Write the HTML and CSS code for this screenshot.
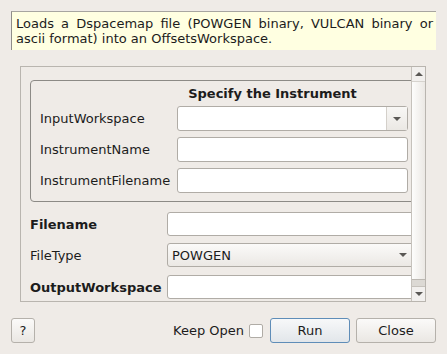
FILE: index.html
```html
<!DOCTYPE html>
<html lang="en">
<head>
    <meta charset="UTF-8">
    <title>LoadDspacemap</title>
    <link rel="stylesheet" href="styles.css">
</head>
<body>
  <div class="dialog">
    <div class="desc">
      Loads a Dspacemap file (POWGEN binary, VULCAN binary or ascii format) into an OffsetsWorkspace.
    </div>

    <div class="scroll">
      <div class="scroll-content">
        <div class="form">
          <fieldset class="group">
            <div class="group-title">Specify the Instrument</div>
            <div class="row">
              <label>InputWorkspace</label>
              <div class="combo edit">
                <span class="combo-text"></span>
                <span class="combo-btn"><span class="arrow"></span></span>
              </div>
            </div>
            <div class="row">
              <label>InstrumentName</label>
              <input type="text">
            </div>
            <div class="row">
              <label>InstrumentFilename</label>
              <input type="text">
            </div>
          </fieldset>

          <div class="row outer">
            <label class="req">Filename</label>
            <input type="text">
          </div>
          <div class="row outer">
            <label>FileType</label>
            <div class="combo button">
              <span class="combo-text">POWGEN</span>
              <span class="arrow"></span>
            </div>
          </div>
          <div class="row outer">
            <label class="req">OutputWorkspace</label>
            <input type="text">
          </div>
        </div>
      </div>
      <div class="vbar">
        <div class="vbar-btn"><span class="arrow up"></span></div>
        <div class="vbar-track">
          <div class="vbar-thumb"></div>
        </div>
        <div class="vbar-btn"><span class="arrow"></span></div>
      </div>
    </div>

    <div class="footer">
      <button class="btn help">?</button>
      <div class="spacer"></div>
      <label class="keep">Keep Open <span class="check"></span></label>
      <button class="btn run">Run</button>
      <button class="btn">Close</button>
    </div>
  </div>
</body>
</html>
```

FILE: styles.css
```css
* {
    box-sizing: border-box;
}
body {
    margin: 0;
    background: #efebe7;
    font-family: "DejaVu Sans", sans-serif;
    font-size: 13px;
    color: #1c1c1c;
}
.dialog {
    width: 447px;
    height: 354px;
    padding: 11px 11px 0 11px;
    overflow: hidden;
}
.desc {
    height: 39px;
    background: #ffffe1;
    border-top: 1px solid #a7a5a0;
    border-left: 1px solid #8f8d89;
    padding: 4px 3px 0 4px;
    line-height: 15px;
    text-align: justify;
}
.scroll {
    display: flex;
    margin: 16px 10px 0 9px;
    height: 236px;
    border: 1px solid #b9b5af;
}
.scroll-content {
    flex: 1;
    overflow: hidden;
    position: relative;
}
.form {
    width: 396px;
    padding: 13px 0 0 9px;
}
.group {
    margin: 0;
    padding: 5px 8px 8px 9px;
    border: 1px solid #8c8a86;
    border-radius: 4px;
    min-width: 0;
}
.group-title {
    font-weight: bold;
    text-align: center;
    padding-left: 97px;
    height: 20px;
    line-height: 15px;
}
.row {
    display: flex;
    align-items: center;
    height: 25px;
    margin-bottom: 6px;
}
.group .row:last-child {
    margin-bottom: 0;
}
.row label {
    width: 137px;
    flex: none;
    white-space: nowrap;
}
.row.outer {
    margin-top: 7px;
    margin-bottom: 0;
    height: 24px;
}
.group + .row.outer {
    margin-top: 10px;
}
.row.outer:last-child {
    margin-top: 8px;
}
.req {
    font-weight: bold;
}
input[type="text"] {
    flex: 1;
    height: 100%;
    border: 1px solid #b0aca6;
    border-radius: 3px;
    background: #fff;
    margin: 0;
    font: inherit;
}
.combo {
    flex: 1;
    height: 100%;
    display: flex;
    align-items: center;
    border: 1px solid #b0aca6;
    border-radius: 3px;
}
.combo.edit {
    background: #fff;
}
.combo.button {
    background: linear-gradient(#fbfaf9, #ebe8e4);
    padding: 0 9px 0 4px;
}
.combo-text {
    flex: 1;
}
.combo-btn {
    width: 21px;
    height: 100%;
    border-left: 1px solid #d4d0ca;
    background: linear-gradient(#f8f7f5, #ebe8e4);
    display: flex;
    align-items: center;
    justify-content: center;
}
.arrow {
    width: 0;
    height: 0;
    border-left: 4px solid transparent;
    border-right: 4px solid transparent;
    border-top: 4px solid #5a5855;
}
.arrow.up {
    border-top: none;
    border-bottom: 4px solid #5a5855;
}
.vbar {
    width: 14px;
    flex: none;
    display: flex;
    flex-direction: column;
    border-left: 1px solid #c6c2bc;
}
.vbar-btn {
    height: 14px;
    display: flex;
    align-items: center;
    justify-content: center;
    background: #f2f0ee;
}
.vbar-track {
    flex: 1;
    background: #dcd9d4;
    padding-bottom: 6px;
    border-top: 1px solid #d6d3ce;
    border-bottom: 1px solid #c6c2bc;
}
.vbar-thumb {
    height: 100%;
    background: linear-gradient(to right, #fdfdfc, #ebe8e4);
    border-bottom: 1px solid #bcb8b2;
}
.footer {
    display: flex;
    align-items: center;
    margin-top: 16px;
    height: 25px;
}
.spacer {
    flex: 1;
}
.btn {
    height: 25px;
    width: 80px;
    border: 1px solid #b5b1ab;
    border-radius: 3px;
    background: linear-gradient(#fbfaf9, #eae7e3);
    font: inherit;
    color: inherit;
    padding: 0;
    margin-left: 6px;
}
.btn.help {
    width: 24px;
    margin-left: 0;
}
.btn.run {
    border-color: #5f8db8;
    background: linear-gradient(#f7f8f9, #e2e6ea);
}
.keep {
    display: flex;
    align-items: center;
    margin-right: 1px;
}
.check {
    display: inline-block;
    width: 14px;
    height: 14px;
    margin-left: 5px;
    background: #fff;
    border: 1px solid #b0aca6;
    border-radius: 2px;
}
```
